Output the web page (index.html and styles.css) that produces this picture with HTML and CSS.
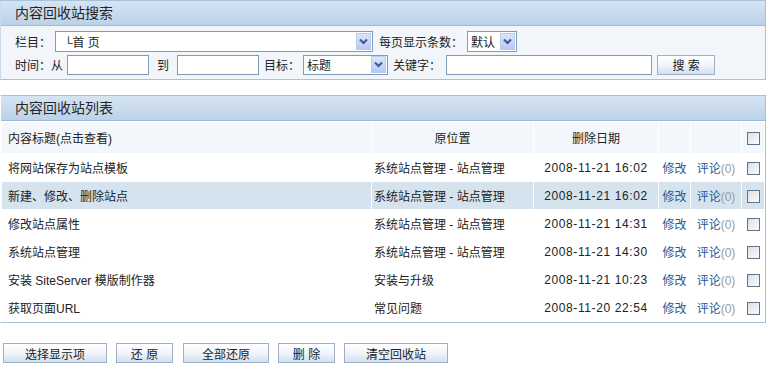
FILE: index.html
```html
<!DOCTYPE html>
<html lang="zh-CN">
<head>
    <meta charset="UTF-8">
    <title>内容回收站</title>
    <link rel="stylesheet" href="styles.css">
</head>
<body>
    <div class="panel search-panel">
        <div class="panel-title">内容回收站搜索</div>
        <div class="search-body">
            <div class="search-row">
                <span class="label">栏目：</span>
                <div class="fake-select node-select">
                    <span class="select-text">└首 页</span>
                    <span class="select-arrow"><svg width="9" height="7" viewBox="0 0 9 7"><path d="M1 1.5 L4.5 5 L8 1.5" fill="none" stroke="#3d5a8c" stroke-width="2"/></svg></span>
                </div>
                <span class="label page-label">每页显示条数：</span>
                <div class="fake-select page-select">
                    <span class="select-text">默认</span>
                    <span class="select-arrow"><svg width="9" height="7" viewBox="0 0 9 7"><path d="M1 1.5 L4.5 5 L8 1.5" fill="none" stroke="#3d5a8c" stroke-width="2"/></svg></span>
                </div>
            </div>
            <div class="search-row">
                <span class="label">时间：从</span>
                <input class="text-input date-input" type="text">
                <span class="label to-label">到</span>
                <input class="text-input date-input date-end" type="text">
                <span class="label gap-left">目标：</span>
                <div class="fake-select target-select">
                    <span class="select-text">标题</span>
                    <span class="select-arrow"><svg width="9" height="7" viewBox="0 0 9 7"><path d="M1 1.5 L4.5 5 L8 1.5" fill="none" stroke="#3d5a8c" stroke-width="2"/></svg></span>
                </div>
                <span class="label gap-left">关键字：</span>
                <input class="text-input keyword-input" type="text">
                <button class="btn search-btn">搜 索</button>
            </div>
        </div>
    </div>

    <div class="panel list-panel">
        <div class="panel-title">内容回收站列表</div>
        <table class="list-table">
            <colgroup>
                <col class="col-title">
                <col class="col-pos">
                <col class="col-date">
                <col class="col-edit">
                <col class="col-comment">
                <col class="col-check">
            </colgroup>
            <tr class="head-row">
                <td>内容标题(点击查看)</td>
                <td class="center">原位置</td>
                <td class="center">删除日期</td>
                <td></td>
                <td></td>
                <td class="center"><span class="checkbox"></span></td>
            </tr>
            <tr>
                <td>将网站保存为站点模板</td>
                <td>系统站点管理 - 站点管理</td>
                <td class="center date">2008-11-21 16:02</td>
                <td class="center"><a href="#">修改</a></td>
                <td class="center"><a href="#">评论</a><span class="count">(0)</span></td>
                <td class="center"><span class="checkbox"></span></td>
            </tr>
            <tr class="hover-row">
                <td>新建、修改、删除站点</td>
                <td>系统站点管理 - 站点管理</td>
                <td class="center date">2008-11-21 16:02</td>
                <td class="center"><a href="#">修改</a></td>
                <td class="center"><a href="#">评论</a><span class="count">(0)</span></td>
                <td class="center"><span class="checkbox"></span></td>
            </tr>
            <tr>
                <td>修改站点属性</td>
                <td>系统站点管理 - 站点管理</td>
                <td class="center date">2008-11-21 14:31</td>
                <td class="center"><a href="#">修改</a></td>
                <td class="center"><a href="#">评论</a><span class="count">(0)</span></td>
                <td class="center"><span class="checkbox"></span></td>
            </tr>
            <tr>
                <td>系统站点管理</td>
                <td>系统站点管理 - 站点管理</td>
                <td class="center date">2008-11-21 14:30</td>
                <td class="center"><a href="#">修改</a></td>
                <td class="center"><a href="#">评论</a><span class="count">(0)</span></td>
                <td class="center"><span class="checkbox"></span></td>
            </tr>
            <tr>
                <td>安装 SiteServer 模版制作器</td>
                <td>安装与升级</td>
                <td class="center date">2008-11-21 10:23</td>
                <td class="center"><a href="#">修改</a></td>
                <td class="center"><a href="#">评论</a><span class="count">(0)</span></td>
                <td class="center"><span class="checkbox"></span></td>
            </tr>
            <tr>
                <td>获取页面URL</td>
                <td>常见问题</td>
                <td class="center date">2008-11-20 22:54</td>
                <td class="center"><a href="#">修改</a></td>
                <td class="center"><a href="#">评论</a><span class="count">(0)</span></td>
                <td class="center"><span class="checkbox"></span></td>
            </tr>
        </table>
    </div>

    <div class="actions">
        <button class="btn wide-btn">选择显示项</button>
        <button class="btn short-btn">还 原</button>
        <button class="btn mid-btn">全部还原</button>
        <button class="btn short-btn">删 除</button>
        <button class="btn wide-btn">清空回收站</button>
    </div>
</body>
</html>
```

FILE: styles.css
```css
body {
    margin: 0;
    width: 766px;
    font-family: "Liberation Sans", "Noto Sans CJK SC", sans-serif;
    font-size: 12px;
    color: #222;
    background: #fff;
}
.panel {
    border: 1px solid #a9c2dc;
    border-left-color: #c9d9ea;
}
.panel-title {
    height: 24px;
    line-height: 24px;
    padding-left: 14px;
    font-size: 14px;
    color: #262626;
    background-image: linear-gradient(to bottom, #d6e4f2, #bcd2e8);
    border-bottom: 1px solid #9fbbd8;
}
.search-body {
    background: #f2f6fb;
    padding: 5px 0 4px 14px;
    display: flex;
    flex-direction: column;
    gap: 2px;
}
.search-row {
    display: flex;
    align-items: center;
    height: 21px;
}
.label {
    white-space: nowrap;
}
.gap-left {
    margin-left: 5px;
}
.page-label {
    margin-left: 6px;
}
.to-label {
    margin: 0 8px;
}
.fake-select {
    display: flex;
    align-items: center;
    box-sizing: border-box;
    height: 21px;
    border: 1px solid #7f9db9;
    background: #fff;
    padding: 0 1px 0 3px;
}
.select-text {
    flex: 1;
    white-space: nowrap;
}
.select-arrow {
    display: flex;
    align-items: center;
    justify-content: center;
    width: 15px;
    height: 17px;
    border: 1px solid #b9cbf0;
    background-image: linear-gradient(to bottom, #dbe6fd, #b6c9f5);
    box-sizing: border-box;
}
.node-select {
    width: 318px;
    margin-left: 4px;
}
.node-select .select-text {
    padding-left: 5px;
}
.page-select {
    width: 50px;
    margin-left: 4px;
}
.target-select {
    width: 85px;
    height: 20px;
    margin-left: 3px;
}
.text-input {
    height: 20px;
    box-sizing: border-box;
    border: 1px solid #7f9db9;
    background: #fff;
    padding: 0;
    margin: 0;
}
.date-input {
    width: 82px;
    margin-left: 4px;
}
.date-end {
    margin-left: 0;
}
.keyword-input {
    width: 206px;
    margin-left: 5px;
}
.btn {
    height: 20px;
    padding: 0;
    font-family: inherit;
    font-size: 12px;
    color: #222;
    border: 1px solid #9cb0c8;
    background-image: linear-gradient(to bottom, #ffffff, #f1f5fb 50%, #d3e0f1);
    cursor: pointer;
}
.search-btn {
    width: 58px;
    margin-left: 5px;
}
.list-panel {
    margin-top: 15px;
    border-left-color: #ffffff;
}
.list-table {
    width: 100%;
    table-layout: fixed;
    border-collapse: collapse;
}
.col-title { width: 370px; }
.col-pos { width: 162px; }
.col-date { width: 125px; }
.col-edit { width: 32px; }
.col-comment { width: 51px; }
.list-table td {
    height: 27px;
    padding: 0 0 0 2px;
    border: 1px solid #fff;
    white-space: nowrap;
}
.list-table tr td:first-child {
    padding-left: 6px;
}
.head-row td {
    height: 31px;
    background: #f3f7fb;
}
.list-table td.center {
    text-align: center;
    padding-left: 0;
}
.hover-row td {
    background: #d5e3ef;
}
.date {
    letter-spacing: 0.6px;
}
a {
    color: #1e5b99;
    text-decoration: none;
}
.count {
    color: #9a9a9a;
}
.checkbox {
    display: inline-block;
    width: 11px;
    height: 11px;
    border: 1px solid #5e738a;
    background-image: linear-gradient(to bottom right, #dcdfe3, #fbfbfb);
    vertical-align: middle;
}
.actions {
    display: flex;
    gap: 9px;
    padding: 20px 0 0 3px;
}
.wide-btn { width: 104px; }
.short-btn { width: 57px; }
.mid-btn { width: 86px; margin-left: 1px; }
```
